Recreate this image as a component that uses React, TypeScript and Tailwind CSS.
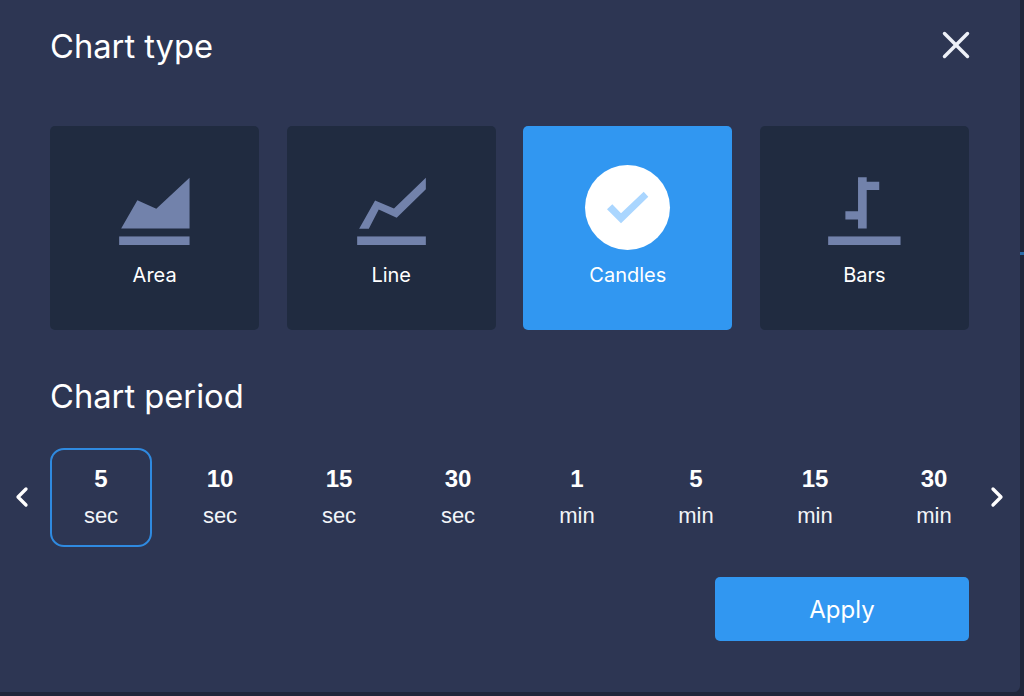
import type { ReactNode } from 'react';
import { ChevronLeft, ChevronRight, X } from 'lucide-react';

const PERIODS = [
  { value: '5', unit: 'sec' },
  { value: '10', unit: 'sec' },
  { value: '15', unit: 'sec' },
  { value: '30', unit: 'sec' },
  { value: '1', unit: 'min' },
  { value: '5', unit: 'min' },
  { value: '15', unit: 'min' },
  { value: '30', unit: 'min' },
];

function AreaIcon() {
  return (
    <svg width="71" height="68" viewBox="0 0 71 68.3" fill="#7282ab">
      <path d="M2 51.7 L18.3 23.3 L37.3 32 L70.7 0.7 V51.7 Z" />
      <rect x="0" y="59.7" width="70.7" height="8.6" />
    </svg>
  );
}

function LineIcon() {
  return (
    <svg width="69" height="68" viewBox="0 0 69 68.3" fill="#7282ab">
      <path d="M2 52 L18 23.7 L37 31.7 L69 0.7 V12.3 L39.7 41 L21.7 32.7 L11.7 52 Z" />
      <rect x="0" y="59.7" width="69" height="8.6" />
    </svg>
  );
}

function BarsIcon() {
  return (
    <svg width="73" height="68" viewBox="0 0 73 68.3" fill="#7282ab">
      <path d="M30 0.3 H38.7 V4.7 H51.3 V13 H38.7 V51.7 H30 V42.7 H17.3 V34.3 H30 Z" />
      <rect x="0" y="59.7" width="72.7" height="8.6" />
    </svg>
  );
}

function CheckIcon() {
  return (
    <svg width="85" height="85" viewBox="0 0 85 85" fill="#aad6ff">
      <path d="M22 44.3 L27.3 39.3 L36 48.3 L58.7 26.7 L63.3 31.7 L36 58.3 Z" />
    </svg>
  );
}

function ChartCard({ label, icon, active }: { label: string; icon: ReactNode; active?: boolean }) {
  return (
    <button
      className={`flex h-[204px] flex-col items-center rounded-[5px] ${active ? 'bg-[#3197f1]' : 'bg-[#202b40]'}`}
    >
      <div className="flex h-[119px] w-full items-end justify-center">{icon}</div>
      <span className="mt-[18px] text-[20px] leading-[24px] text-white">{label}</span>
    </button>
  );
}

export default function App() {
  return (
    <div className="relative h-[696px] w-[1024px] overflow-hidden bg-[#20263a] font-['Inter',sans-serif]">
      <div className="absolute left-[1020px] top-[252px] h-[3px] w-[4px] bg-[#2a6ba6]" />
      <div className="h-[692px] w-[1020px] rounded-br-[6px] bg-[#2d3653] pt-[24px] text-white">
        <div className="flex h-[44px] items-start justify-between pl-[50px] pr-[41px]">
          <h2 className="text-[32.7px] leading-[44px]">Chart type</h2>
          <X size={46} strokeWidth={1.8} className="-mt-[2px] text-[#eef1f8]" />
        </div>

        <div className="mt-[58px] grid grid-cols-4 gap-[27.33px] pl-[50px] pr-[51px]">
          <ChartCard label="Area" icon={<AreaIcon />} />
          <ChartCard label="Line" icon={<LineIcon />} />
          <ChartCard
            label="Candles"
            active
            icon={
              <div className="-mb-[5px] h-[85px] w-[85px] rounded-full bg-white">
                <CheckIcon />
              </div>
            }
          />
          <ChartCard label="Bars" icon={<BarsIcon />} />
        </div>

        <h2 className="mt-[44px] pl-[50px] text-[32.7px] leading-[44px]">Chart period</h2>

        <div className="relative mt-[30px] flex gap-[17px] pl-[50px] font-['Liberation_Sans',sans-serif]">
          <ChevronLeft size={32} strokeWidth={2.5} className="absolute left-[6px] top-[33px] text-white" />
          {PERIODS.map((p, i) => (
            <div
              key={i}
              className={`flex h-[99px] w-[102px] flex-col items-center rounded-[14px] border-2 pt-[15px] ${
                i === 0 ? 'border-[#2f8ae0]' : 'border-transparent'
              }`}
            >
              <span className="text-[24px] font-bold leading-[28px]">{p.value}</span>
              <span className="mt-[9px] text-[22px] leading-[28px] text-[#f2f4f8]">{p.unit}</span>
            </div>
          ))}
          <ChevronRight size={32} strokeWidth={2.5} className="absolute left-[981px] top-[33px] text-white" />
        </div>

        <div className="mt-[30px] flex justify-end pr-[51px]">
          <button className="h-[64px] w-[254px] rounded-[5px] bg-[#3197f1] pt-[2px] text-[24px] text-white">Apply</button>
        </div>
      </div>
    </div>
  );
}
